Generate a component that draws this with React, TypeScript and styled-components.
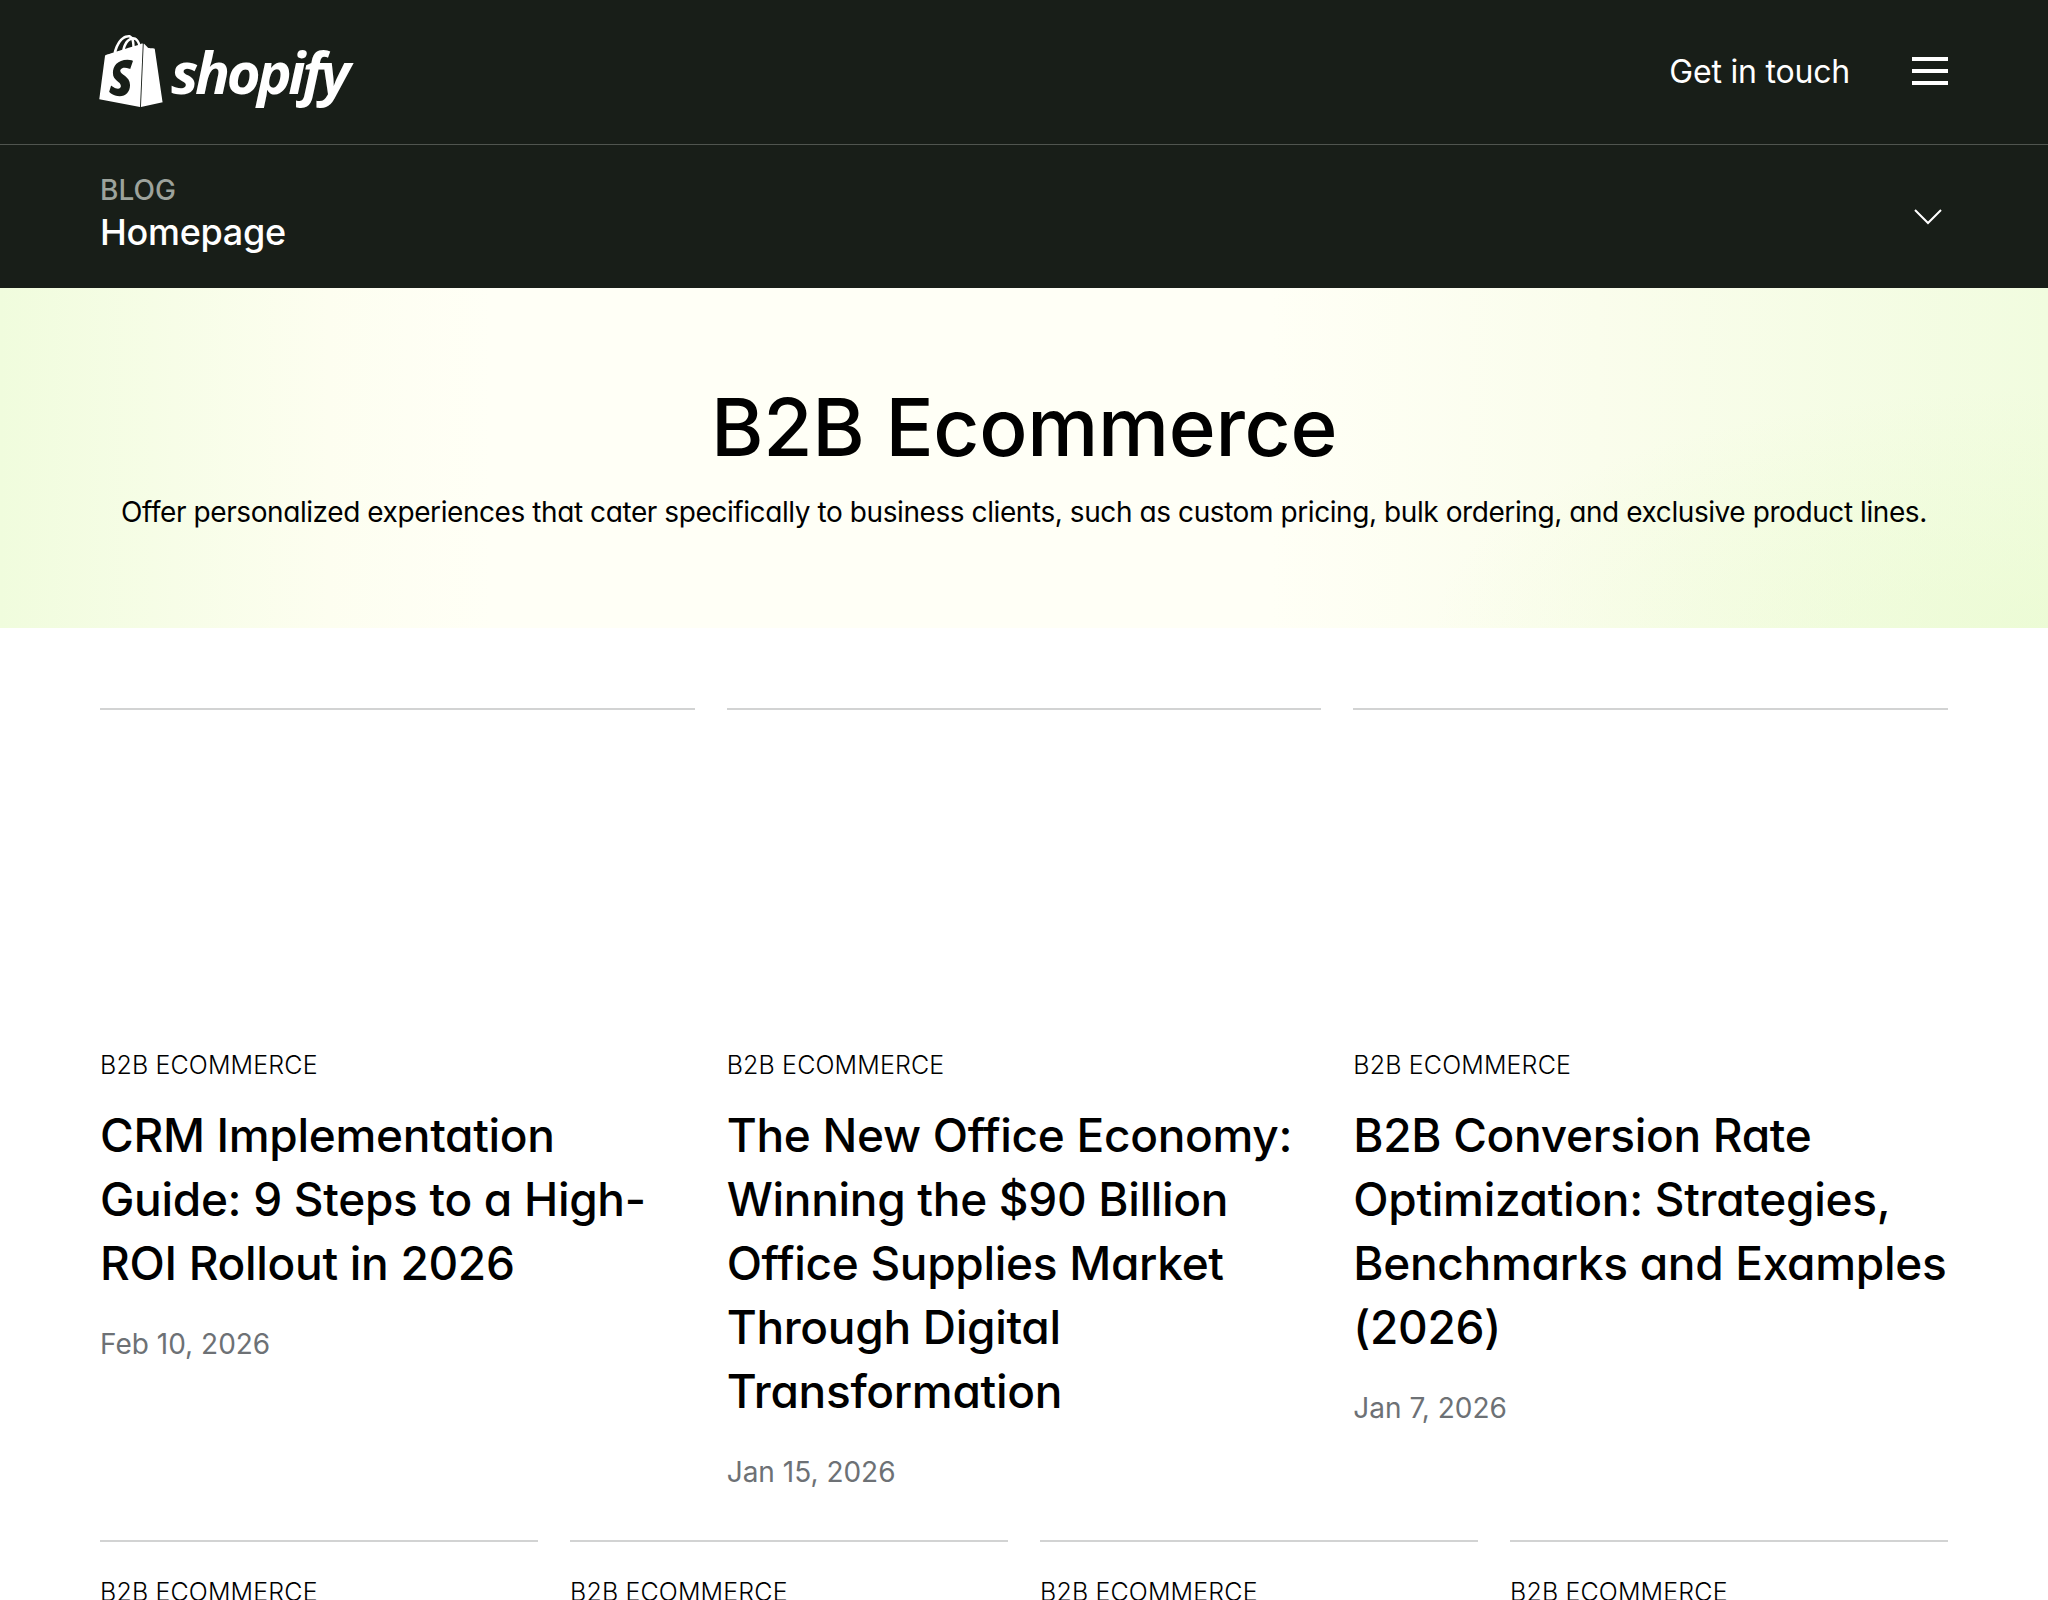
import React from 'react';
import styled, { createGlobalStyle } from 'styled-components';
import { SiShopify } from 'react-icons/si';

const Global = createGlobalStyle`
  html, body { margin: 0; padding: 0; background: #fff; overflow: hidden; }
  #root { height: 1600px; overflow: hidden; }
  * { box-sizing: border-box; }
`;

const Page = styled.div`
  font-family: Inter, "Liberation Sans", sans-serif;
  color: #000;
`;

const TopBar = styled.header`
  height: 145px;
  padding: 0 76px 0 100px;
  background: #181e18;
  border-bottom: 1px solid #50554f;
  display: flex;
  align-items: center;
  justify-content: space-between;
  color: #fff;
`;

const Logo = styled.a`
  display: flex;
  align-items: center;
  gap: 4px;
  color: #fff;
  margin-left: -5px;
  margin-top: -3px;
`;

const Wordmark = styled.span`
  font-family: "Open Sans", sans-serif;
  font-style: italic;
  font-weight: 700;
  font-size: 58px;
  line-height: 60px;
  letter-spacing: -3.4px;
  margin-top: 2px;
`;

const TopActions = styled.div`
  display: flex;
  align-items: center;
  gap: 62px;
  padding-right: 24px;
`;

const Contact = styled.a`
  font-size: 32px;
  font-weight: 400;
  line-height: 40px;
  letter-spacing: -0.2px;
  color: #fff;
`;

const Burger = styled.div`
  width: 36px;
  display: flex;
  flex-direction: column;
  gap: 8px;
  margin-top: -3px;
  span { display: block; height: 4px; background: #fff; }
`;

const SubBar = styled.nav`
  height: 143px;
  padding: 0 106px 0 100px;
  background: #181e18;
  display: flex;
  align-items: center;
  justify-content: space-between;
`;

const Crumbs = styled.div`
  display: flex;
  flex-direction: column;
  padding-bottom: 8px;
`;

const Blog = styled.span`
  font-size: 28px;
  line-height: 39px;
  font-weight: 500;
  color: #9da39c;
`;

const Current = styled.span`
  font-size: 36px;
  line-height: 44px;
  font-weight: 500;
  letter-spacing: -0.3px;
  color: #fff;
`;

const Hero = styled.section`
  height: 340px;
  background:
    radial-gradient(ellipse 30% 70% at 100% 100%, rgba(233, 251, 207, 0.6) 0%, rgba(233, 251, 207, 0) 100%),
    linear-gradient(90deg, #f0fcdd 0%, #fdfef0 16%, #fffff6 24%, #fffff6 62%, #fafdec 78%, #f1fcdf 100%);
  display: flex;
  flex-direction: column;
  align-items: center;
  padding-top: 95px;
`;

const HeroTitle = styled.h1`
  margin: 0;
  font-size: 80px;
  line-height: 88px;
  font-weight: 500;
  letter-spacing: -0.3px;
  font-feature-settings: "cv11";
`;

const HeroText = styled.p`
  margin: 21px 0 0;
  font-size: 28px;
  line-height: 40px;
  letter-spacing: -0.42px;
  font-feature-settings: "cv11";
`;

const Main = styled.main`
  padding: 80px 100px 0;
`;

const Grid = styled.div<{ $cols: number }>`
  display: grid;
  grid-template-columns: repeat(${p => p.$cols}, 1fr);
  column-gap: 32px;
`;

const Card = styled.article`
  border-top: 2px solid #d2d3d3;
`;

const Cover = styled.div`
  height: 339px;
`;

const Eyebrow = styled.div`
  font-size: 25px;
  line-height: 32px;
  font-weight: 300;
  letter-spacing: 0.15px;
`;

const CardTitle = styled.h2`
  margin: 22px 0 0;
  font-size: 46px;
  line-height: 64px;
  font-weight: 450;
  letter-spacing: -0.3px;
  font-feature-settings: "cv11";
`;

const DateLine = styled.div`
  margin-top: 31px;
  font-size: 28px;
  line-height: 36px;
  color: #6d7175;
  padding-bottom: 50px;
`;

const SmallCard = styled(Card)`
  padding-top: 34px;
`;

const posts = [
  { title: 'CRM Implementation Guide: 9 Steps to a High-ROI Rollout in 2026', date: 'Feb 10, 2026' },
  { title: 'The New Office Economy: Winning the $90 Billion Office Supplies Market Through Digital Transformation', date: 'Jan 15, 2026' },
  { title: 'B2B Conversion Rate Optimization: Strategies, Benchmarks and Examples (2026)', date: 'Jan 7, 2026' },
];

export default function App() {
  return (
    <Page>
      <Global />
      <TopBar>
        <Logo>
          <SiShopify size={72} />
          <Wordmark>shopify</Wordmark>
        </Logo>
        <TopActions>
          <Contact>Get in touch</Contact>
          <Burger><span /><span /><span /></Burger>
        </TopActions>
      </TopBar>
      <SubBar>
        <Crumbs>
          <Blog>BLOG</Blog>
          <Current>Homepage</Current>
        </Crumbs>
        <svg width="28" height="16" viewBox="0 0 28 16" fill="none" stroke="#fff" strokeWidth="2">
          <path d="M1 1l13 13L27 1" />
        </svg>
      </SubBar>
      <Hero>
        <HeroTitle>B2B Ecommerce</HeroTitle>
        <HeroText>Offer personalized experiences that cater specifically to business clients, such as custom pricing, bulk ordering, and exclusive product lines.</HeroText>
      </Hero>
      <Main>
        <Grid $cols={3}>
          {posts.map(p => (
            <Card key={p.title}>
              <Cover />
              <Eyebrow>B2B ECOMMERCE</Eyebrow>
              <CardTitle>{p.title}</CardTitle>
              <DateLine>{p.date}</DateLine>
            </Card>
          ))}
        </Grid>
        <Grid $cols={4}>
          {[0, 1, 2, 3].map(i => (
            <SmallCard key={i}><Eyebrow>B2B ECOMMERCE</Eyebrow></SmallCard>
          ))}
        </Grid>
      </Main>
    </Page>
  );
}
